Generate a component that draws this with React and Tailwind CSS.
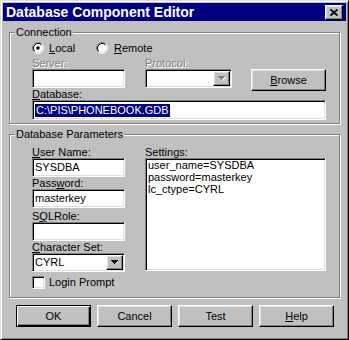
const raised =
  "bg-[#c0c0c0] border border-t-white border-l-white border-r-black border-b-black shadow-[inset_-1px_-1px_0_#808080,inset_1px_1px_0_#dfdfdf]";
const sunken =
  "bg-white border border-t-[#808080] border-l-[#808080] border-r-white border-b-white shadow-[inset_1px_1px_0_#000,inset_-1px_-1px_0_#dfdfdf]";
const disabledText = "text-[#808080] [text-shadow:1px_1px_0_#fff]";

function Radio({ checked }) {
  return (
    <svg width="12" height="12" viewBox="0 0 12 12" className="shrink-0">
      <circle cx="6" cy="6" r="4.5" fill="#fff" />
      <path d="M2.11 9.89 A5.5 5.5 0 0 1 9.89 2.11" fill="none" stroke="#808080" />
      <path d="M9.89 2.11 A5.5 5.5 0 0 1 2.11 9.89" fill="none" stroke="#fff" />
      <path d="M2.82 9.18 A4.5 4.5 0 0 1 9.18 2.82" fill="none" stroke="#000" />
      <path d="M9.18 2.82 A4.5 4.5 0 0 1 2.82 9.18" fill="none" stroke="#dfdfdf" />
      {checked && <circle cx="6" cy="6" r="1.8" fill="#000" />}
    </svg>
  );
}

function Arrow({ disabled }) {
  const rows = (dx, dy, fill) => (
    <g fill={fill}>
      <rect x={0 + dx} y={0 + dy} width="7" height="1" />
      <rect x={1 + dx} y={1 + dy} width="5" height="1" />
      <rect x={2 + dx} y={2 + dy} width="3" height="1" />
      <rect x={3 + dx} y={3 + dy} width="1" height="1" />
    </g>
  );
  return (
    <svg width="8" height="5" viewBox="0 0 8 5" shapeRendering="crispEdges">
      {disabled && rows(1, 1, "#fff")}
      {rows(0, 0, disabled ? "#808080" : "#000")}
    </svg>
  );
}

function Combo({ value, disabled, className }) {
  return (
    <div className={`${sunken} h-[19px] p-[1px] flex ${className}`}>
      <span className="flex-1 pl-[1px] leading-[15px]">{value}</span>
      <div className={`${raised} w-[17px] h-full flex items-center justify-center`}>
        <Arrow disabled={disabled} />
      </div>
    </div>
  );
}

function Group({ label, className, children }) {
  return (
    <div className={`relative border border-[#808080] shadow-[inset_1px_1px_0_#fff,1px_1px_0_#fff] ${className}`}>
      <span className="absolute left-[5px] -top-[7px] bg-[#c0c0c0] px-[1px] leading-[12px]">
        {label}
      </span>
      {children}
    </div>
  );
}

function Label({ children, className = "" }) {
  return <div className={`h-[12px] leading-[12px] ${className}`}>{children}</div>;
}

function Edit({ value, className = "" }) {
  return <div className={`${sunken} h-[19px] pl-[2px] leading-[17px] ${className}`}>{value}</div>;
}

export default function App() {
  return (
    <div className="w-[349px] h-[340px] bg-[#c0c0c0] font-['Liberation_Sans',Arial,sans-serif] text-[11px] text-black border border-t-[#dfdfdf] border-l-[#dfdfdf] border-r-black border-b-black shadow-[inset_1px_1px_0_#fff,inset_-1px_-1px_0_#808080] p-[2px] flex flex-col">
      <div className="h-[18px] bg-[#000080] flex items-center pl-[3px] pr-[3px]">
        <span className="text-white font-bold text-[14px] leading-[18px]">Database Component Editor</span>
        <div className={`${raised} ml-auto w-[18px] h-[15px] flex items-center justify-center`}>
          <svg width="8" height="7" viewBox="0 0 8 7">
            <path d="M0.5 0.5 L7.5 6.5 M7.5 0.5 L0.5 6.5" stroke="#000" strokeWidth="1.8" />
          </svg>
        </div>
      </div>

      <div className="px-[6px] pt-[11px] flex flex-col">
        <Group label="Connection" className="h-[92px] pl-[22px] pt-[9px]">
          <div className="flex h-[12px] items-center">
            <div className="w-[64px] flex items-center gap-[5px]">
              <Radio checked />
              <span className="leading-[12px]"><u>L</u>ocal</span>
            </div>
            <div className="flex items-center gap-[6px]">
              <Radio />
              <span className="leading-[12px]"><u>R</u>emote</span>
            </div>
          </div>

          <div className="mt-[3px] flex items-start h-[31px]">
            <div className="w-[93px]">
              <Label className={disabledText}>Server:</Label>
              <Edit value="" />
            </div>
            <div className="ml-[20px] w-[87px]">
              <Label className={disabledText}>Protocol:</Label>
              <Combo value="" disabled />
            </div>
            <button className={`${raised} ml-[19px] mt-[12px] w-[75px] h-[22px] leading-[20px]`}>
              <u>B</u>rowse
            </button>
          </div>

          <Label><u>D</u>atabase:</Label>
          <div className={`${sunken} w-[294px] h-[20px] pl-[2px] flex items-center`}>
            <span className="bg-[#000080] text-white px-[1px] leading-[13px]">C:\PIS\PHONEBOOK.GDB</span>
          </div>
        </Group>

        <Group label="Database Parameters" className="mt-[10px] h-[164px] pl-[22px] pt-[11px] flex">
          <div className="w-[93px] flex flex-col">
            <Label><u>U</u>ser Name:</Label>
            <Edit value="SYSDBA" />
            <Label>Pass<u>w</u>ord:</Label>
            <Edit value="masterkey" />
            <Label className="mt-[2px]">S<u>Q</u>LRole:</Label>
            <Edit value="" />
            <Label><u>C</u>haracter Set:</Label>
            <Combo value="CYRL" />
            <div className="mt-[4px] flex items-center gap-[4px]">
              <div className={`${sunken} w-[13px] h-[13px]`} />
              <span className="leading-[13px]">Login Prompt</span>
            </div>
          </div>
          <div className="ml-[20px] w-[181px] flex flex-col">
            <Label>Settings:</Label>
            <div className={`${sunken} h-[113px] pl-[2px] leading-[12px]`}>
              <div>user_name=SYSDBA</div>
              <div>password=masterkey</div>
              <div>lc_ctype=CYRL</div>
            </div>
          </div>
        </Group>

        <div className="mt-[7px] pl-[7px] flex gap-[6px]">
          <button className="w-[75px] h-[22px] bg-[#c0c0c0] border border-black shadow-[inset_1px_1px_0_#fff,inset_-1px_-1px_0_#000,inset_-2px_-2px_0_#808080] leading-[20px]">
            OK
          </button>
          <button className={`${raised} w-[75px] h-[22px] leading-[20px]`}>Cancel</button>
          <button className={`${raised} w-[75px] h-[22px] leading-[20px]`}>Test</button>
          <button className={`${raised} w-[75px] h-[22px] leading-[20px]`}>
            <u>H</u>elp
          </button>
        </div>
      </div>
    </div>
  );
}
